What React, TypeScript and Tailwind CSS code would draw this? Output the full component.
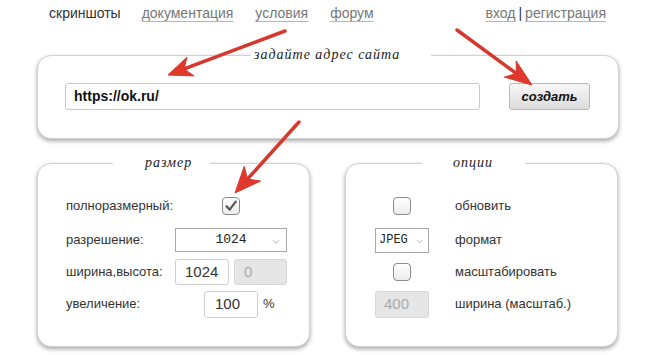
import { ChevronDown } from "lucide-react";

const sans = "font-['Liberation_Sans',Arial,sans-serif]";
const serif = "font-['Liberation_Serif','Times_New_Roman',serif]";
const mono = "font-['Liberation_Mono','Courier_New',monospace]";

function Checkbox({ checked = false }: { checked?: boolean }) {
    return (
        <div className="w-[18px] h-[18px] rounded-[4px] border border-[#8a8a8a] bg-gradient-to-b from-white to-[#ececec] flex items-center justify-center">
            {checked && (
                <svg width="14" height="14" viewBox="0 0 14 14">
                    <path d="M2.5 7.2 L5.6 10.6 L11.8 2.6" fill="none" stroke="#555" strokeWidth="2.2" strokeLinecap="round" strokeLinejoin="round" />
                </svg>
            )}
        </div>
    );
}

function Panel({ title, titleBox, className, children }: {
    title: string;
    titleBox: string;
    className: string;
    children: React.ReactNode;
}) {
    return (
        <div className={`relative shrink-0 bg-white border border-[#d2d2d2] rounded-[14px] shadow-[0_2px_4px_rgba(0,0,0,0.35)] ${className}`}>
            <span className={`absolute -top-[11px] ${titleBox} h-[20px] bg-white ${serif} italic text-[14px] leading-[20px] tracking-[1px] text-[#222]`}>
                {title}
            </span>
            {children}
        </div>
    );
}

function Arrow({ x1, y1, x2, y2, len = 24, half = 10 }: { x1: number; y1: number; x2: number; y2: number; len?: number; half?: number }) {
    const dx = x2 - x1;
    const dy = y2 - y1;
    const d = Math.hypot(dx, dy);
    const ux = dx / d;
    const uy = dy / d;
    const nx = -uy;
    const ny = ux;
    const bx = x2 - ux * len;
    const by = y2 - uy * len;
    const mx = x2 - ux * len * 0.72;
    const my = y2 - uy * len * 0.72;
    const pts = [
        [x2, y2],
        [bx + nx * half, by + ny * half],
        [mx, my],
        [bx - nx * half, by - ny * half],
    ].map((p) => p.join(",")).join(" ");
    return (
        <g>
            <line x1={x1} y1={y1} x2={mx} y2={my} stroke="#d5392e" strokeWidth="3.5" strokeLinecap="round" />
            <polygon points={pts} fill="#e0392c" stroke="#d5392e" strokeWidth="1" strokeLinejoin="round" />
        </g>
    );
}

export default function App() {
    const link = "text-[#777] underline decoration-[#b5b5b5] underline-offset-[3px]";
    return (
        <div className={`relative w-[650px] h-[355px] bg-white overflow-hidden ${sans} text-[#333]`}>
            <nav className="flex items-center h-[21px] pt-[5px] pl-[49px] pr-[44px] text-[14px] leading-[16px]">
                <span className="text-[#333]">скриншоты</span>
                <span className={`ml-[21px] ${link}`}>документация</span>
                <span className={`ml-[22px] ${link}`}>условия</span>
                <span className={`ml-[22px] ${link}`}>форум</span>
                <span className="ml-auto flex items-center">
                    <span className={link}>вход</span>
                    <span className="mx-[3px] text-[#333]">|</span>
                    <span className={link}>регистрация</span>
                </span>
            </nav>

            <Panel title="задайте адрес сайта" titleBox="left-[213px] w-[180px] pl-[3px]" className="mt-[34px] ml-[37px] w-[582px] h-[84px]">
                <div className="flex items-center pt-[27px] pl-[27px] pr-[28px]">
                    <div className="w-[415px] h-[27px] border border-[#c8c8c8] rounded-[3px] bg-white flex items-center pl-[8px] text-[14px] font-bold text-[#111]">
                        https://ok.ru/
                    </div>
                    <button className="ml-auto w-[81px] h-[27px] border border-[#b8b8b8] rounded-[3px] bg-gradient-to-b from-[#f7f7f7] to-[#dcdcdc] text-[13px] font-bold italic text-[#111]">
                        создать
                    </button>
                </div>
            </Panel>

            <div className="flex gap-[35px] mt-[24px] pl-[37px] text-[13px]">
                <Panel title="размер" titleBox="left-[75px] w-[97px] pl-[32px]" className="w-[273px] h-[184px]">
                    <div className="flex flex-col pt-[29px] pl-[28px]">
                        <div className="flex items-center h-[26px]">
                            <span className="w-[109px]">полноразмерный:</span>
                            <div className="w-[112px] flex justify-center">
                                <Checkbox checked />
                            </div>
                        </div>
                        <div className="flex items-center h-[26px] mt-[8px]">
                            <span className="w-[109px]">разрешение:</span>
                            <div className={`relative w-[112px] h-[24px] border border-[#a8a8a8] bg-white flex items-center justify-center ${mono} text-[13px] text-[#222]`}>
                                1024
                                <ChevronDown className="absolute right-[5px] top-[8px]" size={10} color="#999" />
                            </div>
                        </div>
                        <div className="flex items-center h-[26px] mt-[6px]">
                            <span className="w-[109px]">ширина,высота:</span>
                            <div className="w-[54px] h-[26px] border border-[#cfcfcf] rounded-[3px] flex items-center pl-[9px] text-[15px] text-[#333]">1024</div>
                            <div className="ml-[5px] w-[53px] h-[26px] border border-[#d6d6d6] rounded-[3px] bg-[#e6e6e6] flex items-center pl-[9px] text-[15px] text-[#aaa]">0</div>
                        </div>
                        <div className="flex items-center h-[26px] mt-[6px]">
                            <span className="w-[138px]">увеличение:</span>
                            <div className="w-[54px] h-[27px] border border-[#cfcfcf] rounded-[3px] flex items-center pl-[10px] text-[15px] text-[#333]">100</div>
                            <span className="ml-[5px]">%</span>
                        </div>
                    </div>
                </Panel>

                <Panel title="опции" titleBox="left-[76px] w-[103px] pl-[31px]" className="w-[273px] h-[184px]">
                    <div className="flex flex-col pt-[29px] pl-[29px]">
                        <div className="flex items-center h-[26px]">
                            <div className="w-[54px] flex justify-center">
                                <Checkbox />
                            </div>
                            <span className="ml-[26px]">обновить</span>
                        </div>
                        <div className="flex items-center h-[26px] mt-[8px]">
                            <div className={`relative w-[54px] h-[25px] border border-[#a8a8a8] bg-white flex items-center pl-[3px] ${mono} text-[12px] text-[#222]`}>
                                JPEG
                                <ChevronDown className="absolute right-[4px] top-[8px]" size={9} color="#999" />
                            </div>
                            <span className="ml-[26px]">формат</span>
                        </div>
                        <div className="flex items-center h-[26px] mt-[6px]">
                            <div className="w-[54px] flex justify-center">
                                <Checkbox />
                            </div>
                            <span className="ml-[26px]">масштабировать</span>
                        </div>
                        <div className="flex items-center h-[26px] mt-[6px]">
                            <div className="w-[54px] h-[27px] border border-[#d6d6d6] rounded-[3px] bg-[#e6e6e6] flex items-center pl-[8px] text-[15px] text-[#aaa]">400</div>
                            <span className="ml-[26px]">ширина (масштаб.)</span>
                        </div>
                    </div>
                </Panel>
            </div>

            <svg className="absolute inset-0 pointer-events-none" width="650" height="355">
                <Arrow x1={285} y1={31} x2={168} y2={75} len={24} half={10} />
                <Arrow x1={457} y1={30} x2={532} y2={85} len={27} half={10} />
                <Arrow x1={299} y1={122} x2={235} y2={193} len={26} half={11} />
            </svg>
        </div>
    );
}
